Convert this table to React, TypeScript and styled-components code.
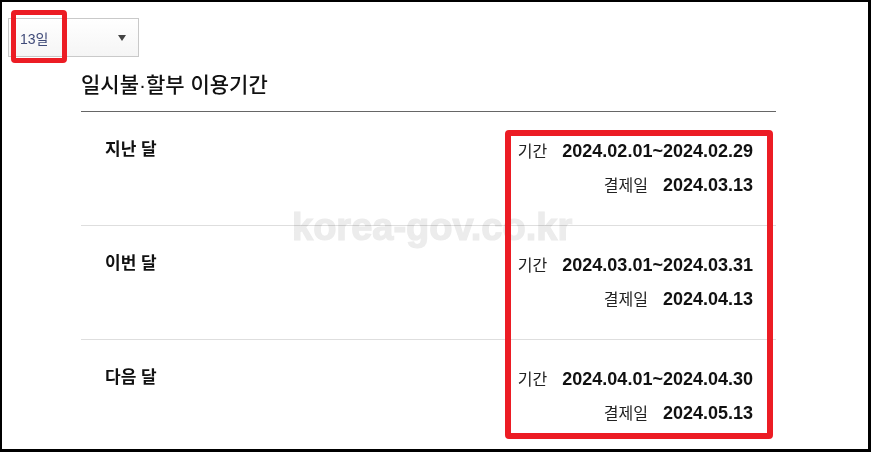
import React from "react";
import styled, { createGlobalStyle } from "styled-components";

const GlobalStyle = createGlobalStyle`
  html, body {
    margin: 0;
    padding: 0;
    background: #ffffff;
  }
  body {
    font-family: "Liberation Sans", "Noto Sans CJK KR", sans-serif;
    color: #111;
  }
`;

interface IPeriod {
  name: string;
  range: string;
  payDay: string;
}

const periods: IPeriod[] = [
  { name: "지난 달", range: "2024.02.01~2024.02.29", payDay: "2024.03.13" },
  { name: "이번 달", range: "2024.03.01~2024.03.31", payDay: "2024.04.13" },
  { name: "다음 달", range: "2024.04.01~2024.04.30", payDay: "2024.05.13" },
];

const Frame = styled.div`
  position: relative;
  width: 871px;
  height: 452px;
  box-sizing: border-box;
  border-style: solid;
  border-color: #000;
  border-width: 2px 3px 3px 2px;
  background: #fff;
  overflow: hidden;
`;

const DaySelect = styled.div`
  margin: 16px 0 0 6px;
  width: 131px;
  height: 39px;
  box-sizing: border-box;
  border: 1px solid #c9c9c9;
  background: linear-gradient(#ffffff, #f5f5f5);
  display: flex;
  align-items: center;
  justify-content: space-between;
  padding: 0 12px 0 11px;
  font-size: 14px;
  color: #3f4a78;
`;

const Caret = styled.span`
  width: 0;
  height: 0;
  margin-top: 1px;
  border-left: 4px solid transparent;
  border-right: 4px solid transparent;
  border-top: 6px solid #444;
`;

const Content = styled.div`
  margin-left: 79px;
  width: 695px;
`;

const Title = styled.h2`
  margin: 14px 0 0;
  font-size: 21px;
  font-weight: 500;
  line-height: 28px;
  padding-bottom: 12px;
  border-bottom: 1px solid #666;
  color: #111;
`;

const Row = styled.div`
  display: flex;
  justify-content: space-between;
  padding: 22px 23px 23px 24px;
  border-bottom: 1px solid #dedede;

  &:last-child {
    border-bottom: none;
  }
`;

const RowLabel = styled.div`
  font-size: 17px;
  font-weight: 700;
  line-height: 31px;
  color: #111;
`;

const Details = styled.div`
  display: flex;
  flex-direction: column;
  align-items: flex-end;
`;

const DetailLine = styled.div`
  display: flex;
  align-items: baseline;
  gap: 15px;
  line-height: 34px;
  height: 34px;
`;

const DetailKey = styled.span`
  font-size: 16px;
  color: #222;
`;

const DetailValue = styled.span`
  font-size: 18px;
  font-weight: 700;
  color: #111;
`;

const Watermark = styled.div`
  position: absolute;
  left: 290px;
  top: 206px;
  font-size: 38px;
  line-height: 38px;
  font-weight: 700;
  color: #ececec;
  -webkit-text-stroke: 1.2px #ececec;
  mix-blend-mode: multiply;
  white-space: nowrap;
  pointer-events: none;
`;

interface MarkProps {
  $left: number;
  $top: number;
  $width: number;
  $height: number;
  $thick: number;
}

const HighlightBox = styled.div<MarkProps>`
  position: absolute;
  left: ${(p) => p.$left}px;
  top: ${(p) => p.$top}px;
  width: ${(p) => p.$width}px;
  height: ${(p) => p.$height}px;
  box-sizing: border-box;
  border: ${(p) => p.$thick}px solid #ec1c24;
  border-radius: 4px;
  pointer-events: none;
`;

const App: React.FC = () => {
  return (
    <>
      <GlobalStyle />
      <Frame>
        <DaySelect>
          <span>13일</span>
          <Caret />
        </DaySelect>
        <Content>
          <Title>일시불·할부 이용기간</Title>
          {periods.map((item) => (
            <Row key={item.name}>
              <RowLabel>{item.name}</RowLabel>
              <Details>
                <DetailLine>
                  <DetailKey>기간</DetailKey>
                  <DetailValue>{item.range}</DetailValue>
                </DetailLine>
                <DetailLine>
                  <DetailKey>결제일</DetailKey>
                  <DetailValue>{item.payDay}</DetailValue>
                </DetailLine>
              </Details>
            </Row>
          ))}
        </Content>
        <Watermark>korea-gov.co.kr</Watermark>
        <HighlightBox $left={9} $top={8} $width={56} $height={53} $thick={5} />
        <HighlightBox $left={503} $top={128} $width={268} $height={309} $thick={6} />
      </Frame>
    </>
  );
};

export default App;
